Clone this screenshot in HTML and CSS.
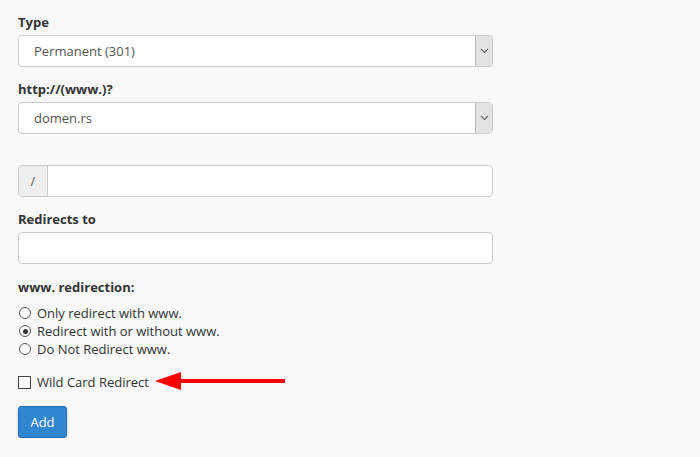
FILE: index.html
```html
<!DOCTYPE html>
<html>
<head>
<meta charset="utf-8">
<link rel="stylesheet" href="styles.css">
</head>
<body>
<form class="form">
  <div class="group">
    <label class="label">Type</label>
    <div class="select">
      <span class="select-value">Permanent (301)</span>
      <span class="select-btn"><svg width="9" height="6" viewBox="0 0 9 6"><path d="M1 1 L4.5 4.5 L8 1" fill="none" stroke="#666" stroke-width="1.2"/></svg></span>
    </div>
  </div>
  <div class="group">
    <label class="label">http://(www.)?</label>
    <div class="select">
      <span class="select-value">domen.rs</span>
      <span class="select-btn"><svg width="9" height="6" viewBox="0 0 9 6"><path d="M1 1 L4.5 4.5 L8 1" fill="none" stroke="#666" stroke-width="1.2"/></svg></span>
    </div>
  </div>
  <div class="group group-path">
    <div class="input-group">
      <span class="addon">/</span>
      <span class="input-field"></span>
    </div>
  </div>
  <div class="group">
    <label class="label">Redirects to</label>
    <div class="input"></div>
  </div>
  <div class="group-www">
    <div class="label">www. redirection:</div>
    <ul class="radios">
      <li class="option"><span class="radio"></span>Only redirect with www.</li>
      <li class="option"><span class="radio checked"></span>Redirect with or without www.</li>
      <li class="option"><span class="radio"></span>Do Not Redirect www.</li>
    </ul>
  </div>
  <div class="wild">
    <span class="checkbox"></span>Wild Card Redirect
    <svg class="arrow" width="132" height="20" viewBox="0 0 132 20"><rect x="24" y="8" width="106" height="4" fill="#ff0000"/><polygon points="0,10 26,1 26,19" fill="#ff0000"/></svg>
  </div>
  <button type="button" class="btn">Add</button>
</form>
</body>
</html>
```
FILE: styles.css
```css
html, body {
  margin: 0;
  padding: 0;
  background: #f9f9f9;
}
body {
  font-family: "Open Sans", "Liberation Sans", sans-serif;
  font-size: 13px;
  color: #333;
}
.form {
  width: 475px;
  padding: 12px 0 0 18px;
}
.group {
  margin-bottom: 12px;
}
.group-path {
  margin-top: 31px;
}
.label {
  display: block;
  font-weight: 700;
  line-height: 20px;
  margin-bottom: 3px;
  color: #333;
}
.select {
  display: flex;
  height: 32px;
  box-sizing: border-box;
  border: 1px solid #ccc;
  border-radius: 4px;
  background: #fff;
  align-items: stretch;
  overflow: hidden;
}
.select-value {
  flex: 1;
  padding-left: 15px;
  line-height: 30px;
  color: #555;
  font-size: 13px;
}
.select-btn {
  width: 16px;
  background: #e3e3e3;
  border-left: 1px solid #bbb;
  display: flex;
  align-items: center;
  justify-content: center;
}
.input-group {
  display: flex;
  height: 32px;
  box-sizing: border-box;
  border: 1px solid #ccc;
  border-radius: 4px;
  background: #fff;
  overflow: hidden;
}
.addon {
  width: 28px;
  background: #eee;
  border-right: 1px solid #ccc;
  display: flex;
  align-items: center;
  justify-content: center;
  color: #555;
}
.input-field {
  flex: 1;
}
.input {
  height: 32px;
  box-sizing: border-box;
  border: 1px solid #ccc;
  border-radius: 4px;
  background: #fff;
}
.group-www {
  margin-top: 13px;
}
.group-www .label {
  margin-bottom: 7px;
}
.radios {
  list-style: none;
  margin: 0;
  padding: 0;
}
.option {
  display: flex;
  align-items: center;
  height: 18px;
  color: #333;
}
.radio {
  width: 12px;
  height: 12px;
  border: 1px solid #555;
  border-radius: 50%;
  background: #fff;
  margin: 0 6px 0 1px;
  position: relative;
  box-sizing: border-box;
}
.radio.checked::after {
  content: "";
  position: absolute;
  left: 2.5px;
  top: 2.5px;
  width: 5px;
  height: 5px;
  border-radius: 50%;
  background: #333;
}
.wild {
  display: flex;
  align-items: center;
  height: 18px;
  margin-top: 15px;
  position: relative;
}
.checkbox {
  width: 13px;
  height: 13px;
  box-sizing: border-box;
  border: 1px solid #444;
  background: #fff;
  margin-right: 6px;
}
.arrow {
  position: absolute;
  left: 137px;
  top: -2px;
}
.btn {
  margin-top: 15px;
  width: 49px;
  height: 32px;
  background: #3287d1;
  border: 1px solid #1f6fb5;
  border-radius: 3px;
  color: #fff;
  font-family: "Open Sans", "Liberation Sans", sans-serif;
  font-size: 13px;
  padding: 0;
  box-shadow: 0 1px 3px rgba(0,0,0,0.2);
}
```
